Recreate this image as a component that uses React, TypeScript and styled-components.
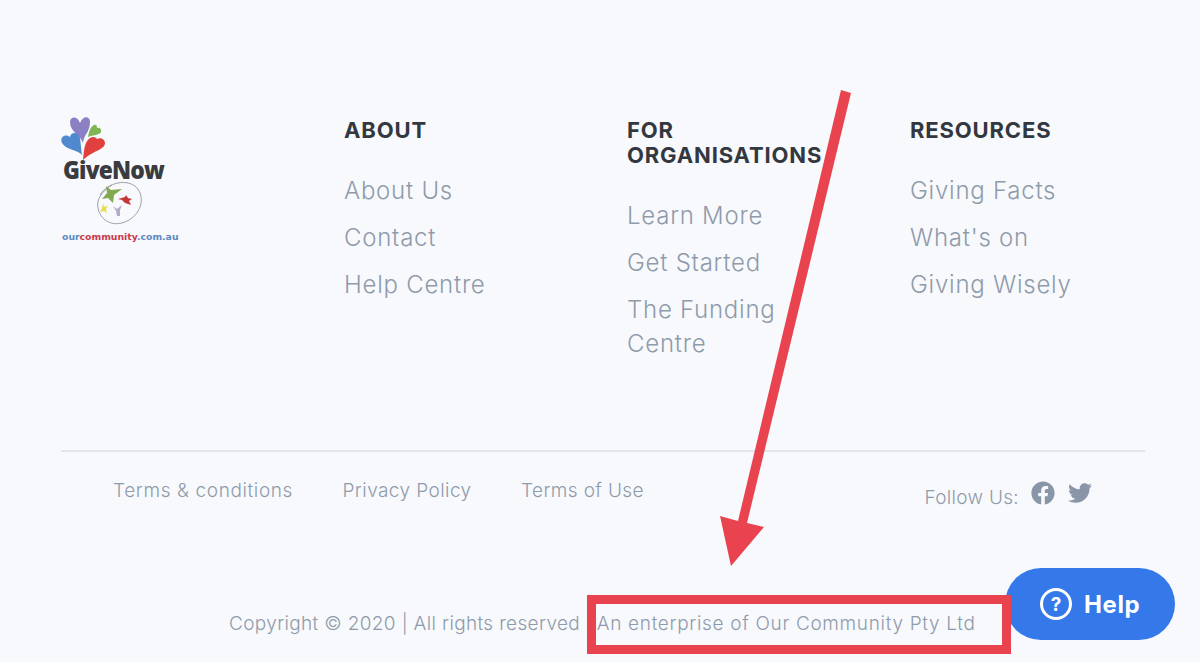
import React from "react";
import styled, { createGlobalStyle } from "styled-components";
import { FaFacebook, FaTwitter } from "react-icons/fa";

const Global = createGlobalStyle`
  html, body { margin: 0; padding: 0; background: #f7f9fc; }
  body { font-family: Inter, "Open Sans", sans-serif; overflow: hidden; }
  a { text-decoration: none; color: inherit; }
`;

const Page = styled.div`
  position: relative;
  width: 1200px;
  height: 662px;
  box-sizing: border-box;
  padding: 117px 55px 0 61px;
  overflow: hidden;
  background: #f7f9fc;
`;

const Columns = styled.div`
  display: grid;
  grid-template-columns: repeat(4, 283px);
  height: 333px;
  align-items: start;
`;

const Logo = styled.svg`
  display: block;
  width: 118px;
  height: 127px;
`;

const Column = styled.div`
  display: flex;
  flex-direction: column;
`;

const Heading = styled.h3`
  margin: 0 0 31px;
  padding-top: 1px;
  font-size: 22px;
  line-height: 25px;
  font-weight: 700;
  letter-spacing: 0.85px;
  color: #33373f;
`;

const LinkList = styled.ul`
  list-style: none;
  margin: 0;
  padding: 0;
  display: flex;
  flex-direction: column;
  gap: 13px;
  max-width: 180px;
`;

const FooterLink = styled.a`
  display: block;
  font-size: 24px;
  line-height: 34px;
  font-weight: 300;
  letter-spacing: 0.75px;
  color: #8f9bab;
`;

const Divider = styled.hr`
  margin: 0;
  border: 0;
  border-top: 2px solid #e2e5ea;
`;

const LegalRow = styled.div`
  display: flex;
  justify-content: space-between;
  padding: 26px 53px 0 52px;
`;

const LegalLinks = styled.div`
  display: flex;
  gap: 49.5px;
`;

const LegalLink = styled.a<{ $tracking: number }>`
  font-size: 19px;
  line-height: 26px;
  font-weight: 300;
  letter-spacing: ${(p) => p.$tracking}px;
  color: #8f9bab;
`;

const Social = styled.div`
  display: flex;
  align-items: flex-start;
  gap: 13px;
  color: #8896a8;
`;

const FollowLabel = styled.span`
  font-size: 19px;
  line-height: 26px;
  font-weight: 300;
  letter-spacing: 0.3px;
  margin-top: 7px;
  margin-right: -1px;
  color: #8f9bab;
`;

const SocialIcon = styled.a`
  display: block;
  width: 24px;
  height: 24px;
  margin-top: 3px;
  svg { display: block; width: 24px; height: 24px; }
`;

const Copyright = styled.p`
  margin: 0;
  padding-top: 100px;
  padding-left: 168px;
  font-size: 19px;
  line-height: 26px;
  font-weight: 300;
  letter-spacing: 0.35px;
  white-space: nowrap;
  color: #8f9bab;
`;

const Enterprise = styled.span`
  margin-left: -1px;
  letter-spacing: 0.67px;
`;

const HelpButton = styled.button`
  position: absolute;
  left: 1005px;
  top: 568px;
  width: 170px;
  height: 72px;
  border: 0;
  padding: 0 0 0 35px;
  border-radius: 36px;
  background: #3478ea;
  color: #fff;
  display: flex;
  align-items: center;
  gap: 12px;
  font-family: Inter, sans-serif;
  font-size: 24px;
  font-weight: 700;
  letter-spacing: 0.6px;
`;

const HelpMark = styled.span`
  box-sizing: border-box;
  width: 32px;
  height: 32px;
  border: 3px solid #fff;
  border-radius: 50%;
  display: flex;
  align-items: center;
  justify-content: center;
  font-size: 19px;
  line-height: 1;
  letter-spacing: 0;
`;

const HighlightBox = styled.div`
  position: absolute;
  left: 587px;
  top: 595px;
  width: 424px;
  height: 59px;
  box-sizing: border-box;
  border: 9.5px solid #e9434f;
  pointer-events: none;
`;

const ArrowOverlay = styled.svg`
  position: absolute;
  left: 0;
  top: 0;
  width: 1200px;
  height: 662px;
  pointer-events: none;
`;

const columns = [
  { title: "ABOUT", links: ["About Us", "Contact", "Help Centre"] },
  { title: <>FOR<br />ORGANISATIONS</>, links: ["Learn More", "Get Started", "The Funding Centre"] },
  { title: "RESOURCES", links: ["Giving Facts", "What's on", "Giving Wisely"] },
];

export default function App() {
  return (
    <Page>
      <Global />
      <Columns>
        <Logo viewBox="61 117 118 127" aria-label="GiveNow">
          <path fill="#8c80c4" d="M83 143 C80 134 70 132 70 122 C70 117 77 115 80 123 C83 115 90 116 90 122 C90 132 84 134 83 143Z" />
          <path fill="#5189cf" d="M82 155 C78 150 66 150 62 143 C59 137 66 133 70 137 C71 131 79 132 80 138 C81 144 81 150 82 155Z" />
          <path fill="#7fb552" d="M88 137 C89 132 90 127 94 125 C97 124 97 127 97 128 C99 127 102 129 101 132 C100 135 93 135 88 137Z" />
          <path fill="#e0413f" d="M83 160 C84 152 84 142 90 138 C93 136 96 137 97 139 C100 137 105 139 105 143 C105 150 92 151 83 160Z" />
          <text x="63" y="179" fontFamily="'Open Sans', sans-serif" fontWeight="800" fontSize="24.5" letterSpacing="-0.9" fill="#3a3b3e" textLength="101" lengthAdjust="spacingAndGlyphs">GiveNow</text>
          <path d="M100 195 C107 183 128 177 138 189 C146 201 139 218 122 223 C110 226 100 219 98 208 C96 200 102 191 112 185" fill="none" stroke="#8a8a92" strokeWidth="0.8" />
          <path d="M106 186 L111 190 L122 189 L114 195 L113 203 L108 198 L102 199 L107 193Z" fill="#82a850" />
          <path d="M118 199 L125 197 L126 195 L128 198 L132 199 L129 201 L131 205 L125 203 L122 200Z" fill="#c5383a" />
          <path d="M103 204 L105 207 L108 206 L106 209 L107 213 L104 211 L100 212 L102 208Z" fill="#e6de50" />
          <path d="M113 206 L117 209 L122 205 L120 210 L120 216 L117 216 L116 211Z" fill="#b5adc8" />
          <text x="62" y="239.5" fontFamily="'DejaVu Sans', sans-serif" fontWeight="700" fontSize="9.3" fill="#5b8ac0">
            our<tspan fill="#c8394a">community</tspan>.com.au
          </text>
        </Logo>
        {columns.map((c, i) => (
          <Column key={i}>
            <Heading>{c.title}</Heading>
            <LinkList>
              {c.links.map((l) => (
                <li key={l}><FooterLink href="#">{l}</FooterLink></li>
              ))}
            </LinkList>
          </Column>
        ))}
      </Columns>
      <Divider />
      <LegalRow>
        <LegalLinks>
          <LegalLink href="#" $tracking={0.62}>Terms &amp; conditions</LegalLink>
          <LegalLink href="#" $tracking={0.42}>Privacy Policy</LegalLink>
          <LegalLink href="#" $tracking={0.38}>Terms of Use</LegalLink>
        </LegalLinks>
        <Social>
          <FollowLabel>Follow Us:</FollowLabel>
          <SocialIcon href="#" aria-label="Facebook"><FaFacebook /></SocialIcon>
          <SocialIcon href="#" aria-label="Twitter"><FaTwitter /></SocialIcon>
        </Social>
      </LegalRow>
      <Copyright>Copyright © 2020 | All rights reserved | <Enterprise>An enterprise of Our Community Pty Ltd</Enterprise></Copyright>
      <HelpButton><HelpMark>?</HelpMark>Help</HelpButton>
      <ArrowOverlay viewBox="0 0 1200 662">
        <polygon fill="#e9434f" points="841,90 851,93 747,523 764,527 731,566 720,516 738,521" />
      </ArrowOverlay>
      <HighlightBox />
    </Page>
  );
}
